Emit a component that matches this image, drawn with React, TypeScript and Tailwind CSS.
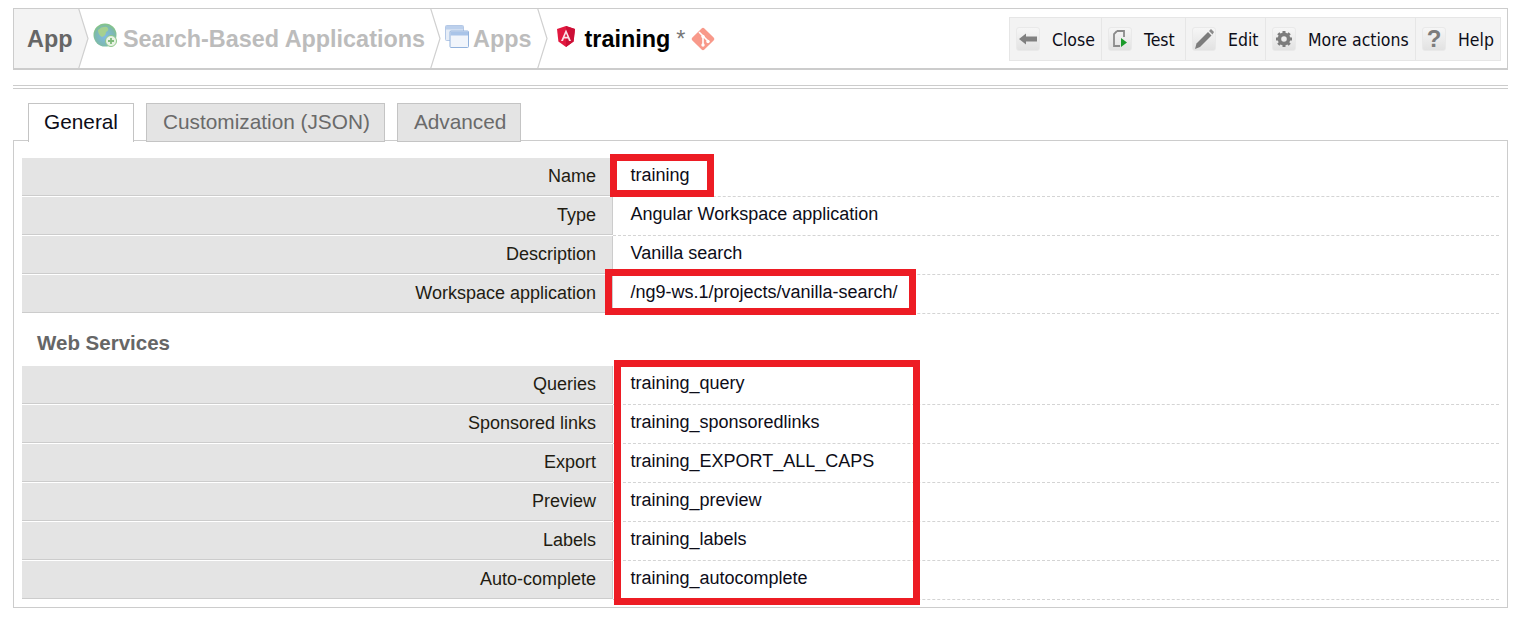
import React from "react";

const arial = "font-['Liberation_Sans',Arial,sans-serif]";

// chevron separator between breadcrumb items
const Chevron = ({ filled }: { filled?: boolean }) => (
  <svg width="14" height="59" viewBox="0 0 14 59" className="shrink-0" fill="none">
    {filled && <path d="M0 0 L1 0 L10 29.5 L1 59 L0 59Z" fill="#f3f3f3" />}
    <path d="M0.5 -1 L10 29.5 L0.5 60" stroke="#d0d0d0" strokeWidth="1.2" />
  </svg>
);

const GlobeIcon = () => (
  <svg width="24" height="24" viewBox="0 0 24 24">
    <defs>
      <radialGradient id="globe" cx="0.5" cy="0.55" r="0.55">
        <stop offset="0" stopColor="#7fb9e6" />
        <stop offset="0.75" stopColor="#7db9b0" />
        <stop offset="1" stopColor="#86c67f" />
      </radialGradient>
    </defs>
    <circle cx="12" cy="12" r="11.5" fill="url(#globe)" />
    <path d="M5 7 Q9 3 14 4 Q17 7 13 9 Q13 13 9 14 Q5 12 5 7Z" fill="#a5d08f" />
    <circle cx="18" cy="18" r="5.5" fill="#e8f3e4" stroke="#8ec68a" />
    <path d="M18 15v6M15 18h6" stroke="#7fbb7a" strokeWidth="1.8" />
  </svg>
);

const AppsIcon = () => (
  <svg width="24" height="23" viewBox="0 0 24 23">
    <rect x="0.5" y="0.5" width="18" height="15" rx="1" fill="#e6edf7" stroke="#b4c8e6" />
    <rect x="1" y="1" width="17" height="3.5" fill="#bcd0ec" />
    <rect x="5" y="6" width="18.5" height="16.5" rx="1" fill="#f1f5fb" stroke="#92b2dc" />
    <rect x="5.5" y="6.5" width="17.5" height="4" fill="#a9c4e8" />
  </svg>
);

const AngularIcon = () => (
  <svg width="18" height="21" viewBox="0 0 18 21">
    <path d="M9 0 L18 3 L16.6 15.5 L9 21 L1.4 15.5 L0 3Z" fill="#e2183f" />
    <path d="M9 0 L18 3 L16.6 15.5 L9 21Z" fill="#cc0f36" />
    <path d="M9 3.5 L4 15 H6 L7 12.4 H11 L12 15 H14 L9 3.5Z M9 7.4 L10.4 10.8 H7.6Z" fill="#fbe3e8" fillRule="evenodd" />
  </svg>
);

const GitIcon = () => (
  <svg width="24" height="24" viewBox="0 0 24 24">
    <rect x="3.5" y="3.5" width="17" height="17" rx="2" transform="rotate(45 12 12)" fill="#f8998a" />
    <path d="M8 5 L18 15 M12 9 V18" stroke="#fff" strokeWidth="1.6" />
    <circle cx="12" cy="9.5" r="1.7" fill="#fff" />
    <circle cx="12" cy="18" r="1.7" fill="#fff" />
    <circle cx="17" cy="14.5" r="1.7" fill="#fff" />
  </svg>
);

const IconBox = ({ children }: { children: React.ReactNode }) => (
  <span className="flex h-6 w-6 shrink-0 items-center justify-center rounded-[3px] border border-[#e9e9e9] bg-gradient-to-b from-[#f6f6f6] to-[#e2e2e2]">
    {children}
  </span>
);

const actions = [
  {
    label: "Close",
    width: "w-[92px]",
    icon: (
      <svg width="18" height="12" viewBox="0 0 18 12">
        <path d="M0 6 L7 0.5 V3.5 H18 V8.5 H7 V11.5Z" fill="#808080" />
      </svg>
    ),
  },
  {
    label: "Test",
    width: "w-[84px]",
    icon: (
      <svg width="16" height="18" viewBox="0 0 16 18" fill="none">
        <path d="M5 1 H12 V7 M8 16 H2 V4 L5 1" stroke="#8a8a8a" strokeWidth="1.8" />
        <path d="M9 8 L15 12.5 L9 17Z" fill="#1a9a2a" />
      </svg>
    ),
  },
  {
    label: "Edit",
    width: "w-[80px]",
    icon: (
      <svg width="22" height="22" viewBox="0 0 22 22">
        <path d="M2 21 L3.5 15.5 L15 4 L18.5 7.5 L7 19Z" fill="#7c7c7c" />
        <path d="M16 3 L18 1 L21 4 L19.5 6.5Z" fill="#8c8c8c" />
      </svg>
    ),
  },
  {
    label: "More actions",
    width: "w-[150px]",
    icon: (
      <svg width="18" height="18" viewBox="0 0 18 18">
        <circle cx="9" cy="9" r="4.6" fill="none" stroke="#7c7c7c" strokeWidth="3.6" />
        <path
          d="M9 1v3M9 14v3M1 9h3M14 9h3M3.3 3.3l2.2 2.2M12.5 12.5l2.2 2.2M3.3 14.7l2.2-2.2M12.5 5.5l2.2-2.2"
          stroke="#7c7c7c"
          strokeWidth="3"
        />
      </svg>
    ),
  },
  {
    label: "Help",
    width: "w-[84px]",
    icon: <span className={`${arial} text-[24px] leading-none font-bold text-[#7c7c7c]`}>?</span>,
  },
];

const Row = ({ label, value }: { label: string; value: string }) => (
  <div className="flex h-[39px]">
    <div className="mb-px flex w-[591px] shrink-0 items-center justify-end border-r border-b border-[#cccccc] bg-[#e4e4e4] pr-4 text-[#221c12]">
      {label}
    </div>
    <div className="flex flex-1 items-center border-b border-dashed border-[#d4d4d4] pb-[3px] pl-[17.5px] text-[#0d0d18]">
      {value}
    </div>
  </div>
);

const tabClass =
  "mr-3 flex h-[39px] items-center border border-[#c4c4c4] bg-[#e4e4e4] pl-4 pr-[14px] pb-[2px] text-[#6a6a6a]";

export default function App() {
  return (
    <div className={`${arial} relative h-[619px] w-[1520px] overflow-hidden bg-white pl-[13px] pr-3 pt-2`}>
      {/* title bar */}
      <header className="flex h-[62px] items-stretch justify-between border-x border-t border-b-2 border-[#cccccc]">
        <nav className="flex items-center overflow-hidden text-[23.4px] font-bold">
          <div className="flex h-full w-[64px] items-center bg-[#f3f3f3] pl-[13px] pt-[2px] text-[#666666]">App</div>
          <Chevron filled />
          <div className="flex h-full items-center gap-[6px] pl-[1px] pr-[5px] text-[#bcbcbc]">
            <span className="-mt-[7px]"><GlobeIcon /></span>
            <span className="pt-[2px]">Search-Based Applications</span>
          </div>
          <Chevron />
          <div className="flex h-full items-center gap-[4px] pl-[1px] pr-[6px] text-[#bcbcbc]">
            <span className="-mt-[5px]"><AppsIcon /></span>
            <span className="pt-[2px]">Apps</span>
          </div>
          <Chevron />
          <div className="flex h-full items-center pl-[6px]">
            <span className="-mt-[5px]"><AngularIcon /></span>
            <span className="ml-[9px] pt-[2px] text-black">training</span>
            <span className="ml-[6px] pt-[2px] font-normal text-[#777777]">*</span>
            <span className="ml-[6px]"><GitIcon /></span>
          </div>
        </nav>
        <div className="mr-[6px] mt-2 flex h-[44px] border border-[#e6e6e6] bg-[#f3f3f3] font-['DejaVu_Sans_Condensed','DejaVu_Sans',sans-serif] text-[17.5px] text-[#0d0d18]">
          {actions.map((a) => (
            <div key={a.label} className={`${a.width} flex items-center border-r border-[#e6e6e6] pl-[6px] last:border-r-0`}>
              <IconBox>{a.icon}</IconBox>
              <span className="ml-[12px] whitespace-nowrap pt-[2px]">{a.label}</span>
            </div>
          ))}
        </div>
      </header>

      {/* double rule */}
      <div className="mt-[15px] h-1 border-y border-[#cccccc]" />

      {/* tabs */}
      <div className="relative z-10 mt-[14px] flex pl-[15px] text-[20.8px]">
        <div className="mr-3 flex h-[39px] items-center border-x border-t border-[#c4c4c4] bg-white px-[15px] pb-[2px] text-[#0d0d18]">General</div>
        <div className={tabClass}>Customization (JSON)</div>
        <div className={tabClass}>Advanced</div>
      </div>

      {/* panel */}
      <main className="-mt-[2px] h-[468px] border border-[#cccccc] px-2 pt-[17px] text-[18px]">
        <Row label="Name" value="training" />
        <Row label="Type" value="Angular Workspace application" />
        <Row label="Description" value="Vanilla search" />
        <Row label="Workspace application" value="/ng9-ws.1/projects/vanilla-search/" />
        <h2 className="flex h-[52px] items-center pl-[15px] pt-[7px] text-[20.5px] font-bold text-[#666666]">Web Services</h2>
        <Row label="Queries" value="training_query" />
        <Row label="Sponsored links" value="training_sponsoredlinks" />
        <Row label="Export" value="training_EXPORT_ALL_CAPS" />
        <Row label="Preview" value="training_preview" />
        <Row label="Labels" value="training_labels" />
        <Row label="Auto-complete" value="training_autocomplete" />
      </main>

      {/* red annotation boxes */}
      <div className="absolute left-[610px] top-[154px] z-20 h-[43px] w-[104px] border-[7px] border-[#ed1c24]" />
      <div className="absolute left-[605px] top-[269px] z-20 h-[46px] w-[311px] border-[7px] border-[#ed1c24]" />
      <div className="absolute left-[614px] top-[360px] z-20 h-[245px] w-[306px] border-[7px] border-[#ed1c24]" />
    </div>
  );
}
